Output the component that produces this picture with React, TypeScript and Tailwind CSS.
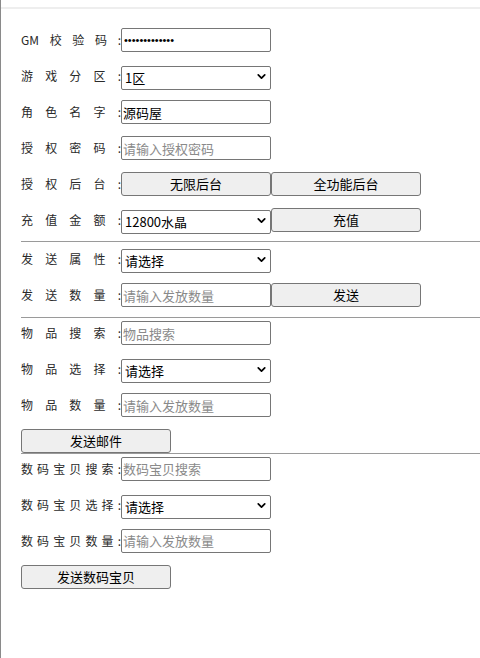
import { ChevronDown } from "lucide-react";

const font = "font-['Microsoft_YaHei','Noto_Sans_CJK_SC',sans-serif]";

const Label = ({ text }: { text: string }) => (
  <span className="w-[100px] shrink-0 text-[12px] leading-none text-[#2a2a2a] [text-align-last:justify] [text-align:justify]">
    {text}
  </span>
);

const TextInput = ({
  value,
  placeholder,
  className = "text-[13px]",
}: {
  value?: string;
  placeholder?: string;
  className?: string;
}) => (
  <input
    type="text"
    defaultValue={value}
    placeholder={placeholder}
    className={`w-[150px] h-6 px-[1px] border border-[#767676] rounded-[2px] bg-white text-black placeholder:text-[#8a8a8a] outline-none ${className}`}
  />
);

const Select = ({ value }: { value: string }) => (
  <div className="relative w-[150px] h-6">
    <select
      defaultValue={value}
      className="appearance-none w-full h-full pl-[3px] pr-5 border border-[#767676] rounded-[2px] bg-white text-[13px] text-black outline-none"
    >
      <option>{value}</option>
    </select>
    <ChevronDown
      size={13}
      strokeWidth={3.2}
      className="absolute right-[3px] top-[6px] pointer-events-none text-black"
    />
  </div>
);

const Btn = ({ text }: { text: string }) => (
  <button className="w-[150px] h-6 border border-[#767676] rounded-[3px] bg-[#efefef] text-[13px] text-black">
    {text}
  </button>
);

const Row = ({
  label,
  children,
  mb = "mb-3",
}: {
  label: string;
  children: React.ReactNode;
  mb?: string;
}) => (
  <div className={`flex items-center h-6 ${mb}`}>
    <Label text={label} />
    {children}
  </div>
);

const Divider = ({ className = "" }: { className?: string }) => (
  <div className={`h-px bg-[#9a9a9a] ${className}`} />
);

export default function App() {
  return (
    <div className={`min-h-[658px] bg-white border-l border-[#8a8a8a] ${font}`}>
      <div className="h-[9px] border-b-2 border-[#eeeeee]" />
      <div className="pl-5 pt-[19px]">
        <Row label="GM校验码:">
          <TextInput
            value="•••••••••••••"
            className="font-['Liberation_Sans',sans-serif] text-[11px] tracking-[0px] pl-[2px]"
          />
        </Row>
        <Row label="游戏分区:">
          <Select value="1区" />
        </Row>
        <Row label="角色名字:">
          <TextInput value="源码屋" />
        </Row>
        <Row label="授权密码:">
          <TextInput placeholder="请输入授权密码" />
        </Row>
        <Row label="授权后台:">
          <Btn text="无限后台" />
          <Btn text="全功能后台" />
        </Row>
        <Row label="充值金额:" mb="mb-[9px]">
          <Select value="12800水晶" />
          <Btn text="充值" />
        </Row>
        <Divider className="mb-[5px]" />
        <Row label="发送属性:">
          <Select value="请选择" />
        </Row>
        <Row label="发送数量:" mb="mb-[10px]">
          <TextInput placeholder="请输入发放数量" />
          <Btn text="发送" />
        </Row>
        <Divider className="mb-[3px]" />
        <Row label="物品搜索:">
          <TextInput placeholder="物品搜索" />
        </Row>
        <Row label="物品选择:">
          <Select value="请选择" />
        </Row>
        <Row label="物品数量:" mb="mb-[10px]">
          <TextInput placeholder="请输入发放数量" />
        </Row>
        <Btn text="发送邮件" />
        <Divider className="mb-[3px]" />
        <Row label="数码宝贝搜索:">
          <TextInput placeholder="数码宝贝搜索" />
        </Row>
        <Row label="数码宝贝选择:">
          <Select value="请选择" />
        </Row>
        <Row label="数码宝贝数量:" mb="mb-[10px]">
          <TextInput placeholder="请输入发放数量" />
        </Row>
        <Btn text="发送数码宝贝" />
      </div>
    </div>
  );
}
